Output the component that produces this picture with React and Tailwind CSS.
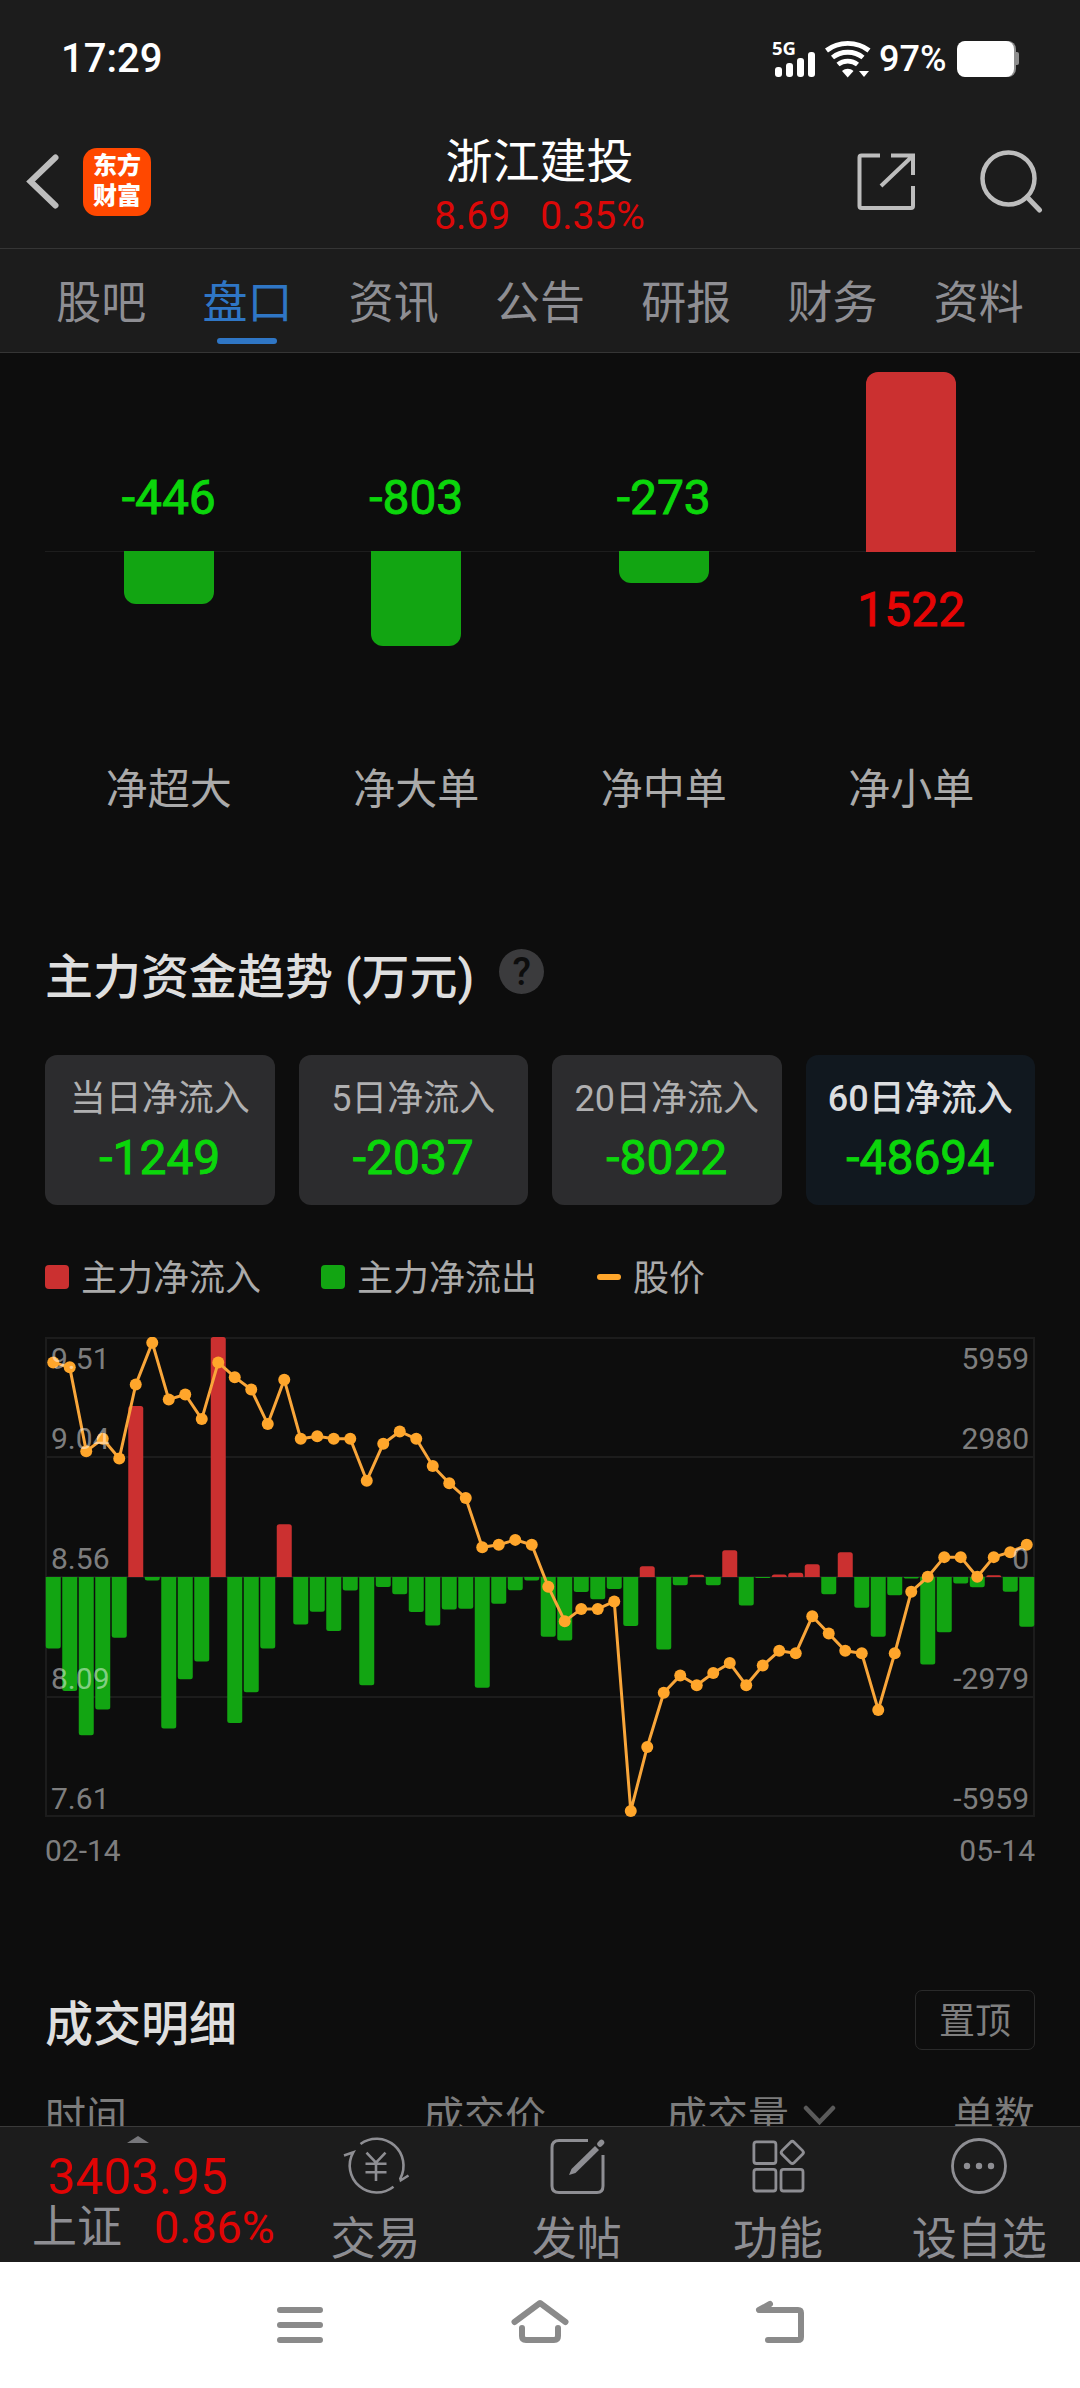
import React from "react";

// font stacks: digits in Roboto, Chinese in Noto
const FONT = "font-['Roboto','Noto_Sans_CJK_SC',sans-serif]";

const tabs = ["股吧", "盘口", "资讯", "公告", "研报", "财务", "资料"];

const orders = [
  { name: "净超大", value: -446, height: 53 },
  { name: "净大单", value: -803, height: 95 },
  { name: "净中单", value: -273, height: 32 },
  { name: "净小单", value: 1522, height: 180 },
];

const periods = [
  { name: "当日净流入", value: "-1249" },
  { name: "5日净流入", value: "-2037" },
  { name: "20日净流入", value: "-8022" },
  { name: "60日净流入", value: "-48694" },
];

const flows = [
  -1773, -2829, -3928, -3290, -1507, 4247, -89, -3760, -2536, -2101, 5959, -3627,
  -2864, -1773, 1312, -1179, -860, -1339, -337, -2687, -248, -426, -869, -1206,
  -807, -789, -2749, -665, -328, -89, -1481, -1578, -372, -550, -301, -1215,
  266, -1800, -204, 53, -204, 665, -709, -27, 62, 106, 319, -426,
  612, -763, -1481, -452, -35, -2172, -1374, -160, -257, 44, -364, -1233,
];

const prices = [
  9.43, 9.41, 9.07, 9.12, 9.04, 9.34, 9.51, 9.28, 9.3, 9.2, 9.43, 9.37,
  9.32, 9.18, 9.36, 9.12, 9.13, 9.12, 9.12, 8.95, 9.1, 9.15, 9.12, 9.01,
  8.94, 8.88, 8.68, 8.69, 8.71, 8.69, 8.52, 8.38, 8.43, 8.43, 8.46, 7.61,
  7.87, 8.09, 8.16, 8.12, 8.17, 8.21, 8.12, 8.2, 8.26, 8.25, 8.4, 8.33,
  8.26, 8.25, 8.02, 8.25, 8.5, 8.56, 8.64, 8.64, 8.56, 8.64, 8.66, 8.69,
];

const axis = [
  { y: 32, left: "9.51", right: "5959" },
  { y: 112, left: "9.04", right: "2980" },
  { y: 232, left: "8.56", right: "0" },
  { y: 352, left: "8.09", right: "-2979" },
  { y: 472, left: "7.61", right: "-5959" },
];

const StatusBar = () => (
  <div className="h-[118px] flex items-start justify-between pl-[61px] pr-[60px] text-white font-medium">
    <div className="text-[40px] leading-[46px] mt-[36px]">17:29</div>
    <div className="flex items-center mt-[36px] h-[46px]">
      <svg width="46" height="46" viewBox="0 0 46 46" fill="#fff">
        <text x="0" y="19" fontSize="18.5" fontWeight="700" fontFamily="Noto Sans">5G</text>
        <rect x="3" y="31" width="7" height="10" rx="3" />
        <rect x="14" y="27" width="7" height="14" rx="3" />
        <rect x="25" y="22" width="7" height="19" rx="3" />
        <rect x="36" y="16" width="7" height="25" rx="3" />
      </svg>
      <svg className="ml-[6px]" width="48" height="46" viewBox="0 0 48 46" fill="none" stroke="#fff" strokeWidth="4.8">
        <path d="M2.5 14.5C14.5 5 33 5 45 14.5" />
        <path d="M8.5 21.5C17 14.5 30.5 14.5 39 21.5" />
        <path d="M14 28.5C19.5 24 28 24 33.5 28.5" />
        <path d="M18 35C21.5 32 26 32 29.5 35L23.7 41.5Z" fill="#fff" stroke="none" />
        <path d="M35 35H45L40 41Z" fill="#fff" stroke="none" />
      </svg>
      <span className="ml-[7px] text-[36px] leading-[46px] w-[73px]">97%</span>
      <svg className="ml-[4px]" width="64" height="46" viewBox="0 0 64 46">
        <rect x="3" y="5" width="57" height="36" rx="8" fill="#8e8e8e" />
        <rect x="58" y="16" width="5" height="13" rx="2" fill="#8e8e8e" />
        <rect x="1" y="5" width="57" height="36" rx="8" fill="#fff" />
      </svg>
    </div>
  </div>
);

const Header = () => (
  <div className="h-[131px] flex items-start justify-between pl-[25px] pr-[37px] border-b border-[#353535]">
    <div className="flex items-center mt-[30px] w-[271px]">
      <svg width="36" height="60" viewBox="0 0 36 60" fill="none" stroke="#bdbdbd" strokeWidth="6" strokeLinecap="round">
        <path d="M30.5 5.5L5.5 29.5L30.5 53.5" />
      </svg>
      <div className="ml-[22px] w-[68px] h-[68px] rounded-[14px] bg-[#ff4800] text-white font-black text-[24px] leading-[30px] text-center pt-[3px]">
        <div>东方</div>
        <div>财富</div>
      </div>
    </div>
    <div className="text-center">
      <div className="text-[47px] leading-[56px] mt-[16px] text-white">浙江建投</div>
      <div className="flex justify-center gap-[30px] text-[39px] leading-[46px] mt-[3px] text-[#dc0808]">
        <span>8.69</span>
        <span>0.35%</span>
      </div>
    </div>
    <div className="flex justify-end w-[260px] pt-[30px]">
      <svg width="64" height="66" viewBox="0 0 64 66" fill="none" stroke="#bdbdbd" strokeWidth="4">
        <path d="M25 7.5H6.5Q4.5 7.5 4.5 9.5V58Q4.5 60 6.5 60H56Q58 60 58 58V38" />
        <path d="M36 7.5H58V27M57 8.5L26 38" />
      </svg>
      <svg className="ml-[58px]" width="66" height="66" viewBox="0 0 66 66" fill="none" stroke="#bdbdbd" strokeWidth="4.5" strokeLinecap="round">
        <circle cx="31.5" cy="30.5" r="26" />
        <path d="M50 49L62.5 62" strokeWidth="5" />
      </svg>
    </div>
  </div>
);

const FlowBars = () => (
  <div className="px-[45px] pt-[18px]">
    <div className="flex">
      {orders.map((o) => {
        const up = o.value > 0;
        return (
          <div key={o.name} className="flex-1 flex flex-col items-center">
            <div className="h-[181px] w-full flex flex-col items-center justify-end border-b border-[#1d1d1d]">
              {up ? (
                <div className="w-[90px] rounded-t-[12px] bg-[#cb3030] -mb-px" style={{ height: o.height }} />
              ) : (
                <div className="text-[48px] leading-[56px] mb-[25px] [-webkit-text-stroke:0.9px] text-[#0bd60b]">{o.value}</div>
              )}
            </div>
            <div className="h-[206px] w-full flex flex-col items-center -mt-px">
              {up ? (
                <div className="text-[48px] leading-[56px] mt-[31px] [-webkit-text-stroke:0.9px] text-[#e60505]">{o.value}</div>
              ) : (
                <div className="w-[90px] rounded-b-[12px] bg-[#12a512]" style={{ height: o.height }} />
              )}
            </div>
            <div className="text-[42px] leading-[60px] mt-[3px] text-[#aaaaaa]">{o.name}</div>
          </div>
        );
      })}
    </div>
  </div>
);

const TrendChart = () => {
  const barX = (i) => 0.75 + i * 16.5;
  const priceY = (p) => 5.7 + ((9.51 - p) / 1.9) * 468.3;
  const points = prices.map((p, i) => [barX(i) + 7.5, priceY(p)]);

  // only the far end of a bar is rounded
  const barPath = (v, i) => {
    const x = barX(i);
    const h = (Math.abs(v) / 5959) * 240;
    const r = Math.min(2.5, h);
    const s = v > 0 ? -1 : 1;
    const end = 240 + s * h;
    return `M${x} 240V${end - s * r}Q${x} ${end} ${x + r} ${end}H${x + 15 - r}Q${x + 15} ${end} ${x + 15} ${end - s * r}V240Z`;
  };

  return (
    <svg width="990" height="536" viewBox="0 0 990 536" className="block mt-[35px]">
      <g fill="none" stroke="#1c1c1c" strokeWidth="2">
        <rect x="1" y="1" width="988" height="478" />
        <path d="M0 120H990M0 240H990M0 360H990" />
      </g>
      {flows.map((v, i) => (
        <path key={i} d={barPath(v, i)} fill={v > 0 ? "#cb3030" : "#12a512"} />
      ))}
      <polyline points={points.map((p) => p.join(",")).join(" ")} fill="none" stroke="#f9a63a" strokeWidth="3" />
      {points.map(([x, y], i) => (
        <circle key={i} cx={x} cy={y} r="6" fill="#ffa62b" />
      ))}
      <g fontSize="30" fill="#fff" fillOpacity="0.48">
        {axis.map((a) => (
          <React.Fragment key={a.y}>
            <text x="6" y={a.y}>{a.left}</text>
            <text x="984" y={a.y} textAnchor="end">{a.right}</text>
          </React.Fragment>
        ))}
        <text x="0" y="524">02-14</text>
        <text x="990" y="524" textAnchor="end">05-14</text>
      </g>
    </svg>
  );
};

const Trend = () => (
  <div className="px-[45px]">
    <div className="flex items-start h-[60px]">
      <h2 className="text-[48px] leading-[60px] font-medium text-[#dedede]">主力资金趋势 (万元)</h2>
      <div className="ml-[25px] mt-px w-[45px] h-[45px] rounded-full bg-[#3b3b3d] text-[#0d0d0d] text-[38px] leading-[46px] font-medium text-center">?</div>
    </div>
    <div className="grid grid-cols-4 gap-[24px] mt-[47px]">
      {periods.map((p, i) => (
        <div
          key={p.name}
          className={`h-[150px] rounded-[12px] text-center pt-[19px] whitespace-nowrap ${i === 3 ? "bg-[#11181f]" : "bg-[#2c2c2e]"}`}
        >
          <div className={`text-[36px] leading-[50px] ${i === 3 ? "font-medium text-[#dcdee0]" : "text-[#b0b0b1]"}`}>{p.name}</div>
          <div className="text-[48px] leading-[56px] mt-[6px] [-webkit-text-stroke:0.9px] text-[#0bd60b]">{p.value}</div>
        </div>
      ))}
    </div>
    <div className="flex items-center h-[50px] gap-[60px] mt-[47px] text-[36px] leading-[50px] text-[#aaaaaa]">
      <div className="flex items-center gap-3">
        <span className="w-6 h-6 rounded-[4px] bg-[#cb3030]" />
        <span className="pt-[4px]">主力净流入</span>
      </div>
      <div className="flex items-center gap-3">
        <span className="w-6 h-6 rounded-[4px] bg-[#12a512]" />
        <span className="pt-[4px]">主力净流出</span>
      </div>
      <div className="flex items-center gap-3">
        <span className="w-6 h-[6px] rounded-[3px] bg-[#ffa62b]" />
        <span className="pt-[4px]">股价</span>
      </div>
    </div>
    <TrendChart />
  </div>
);

const Deals = () => (
  <div className="px-[45px] mt-[117px]">
    <div className="flex items-start justify-between h-[60px]">
      <h2 className="text-[48px] leading-[60px] font-medium text-[#dedede] mt-[5px]">成交明细</h2>
      <div className="w-[120px] h-[60px] rounded-[7px] border border-[#2a2a2a] text-[36px] leading-[62px] text-center text-[#7f7f7f]">置顶</div>
    </div>
    <div className="flex text-[41px] leading-[60px] mt-[37px] text-[#7c7c7c]">
      <span className="w-[378px]">时间</span>
      <span className="w-[243px]">成交价</span>
      <span className="flex-1 flex">
        成交量
        <svg className="ml-[13px] mt-[16px]" width="34" height="24" viewBox="0 0 34 24" fill="none" stroke="#5a5a5a" strokeWidth="4.5" strokeLinecap="round">
          <path d="M4 5L17.5 19L31 5" />
        </svg>
      </span>
      <span>单数</span>
    </div>
  </div>
);

const TradeIcon = () => (
  <svg className="shrink-0" width="68" height="60" viewBox="0 0 68 60" fill="none" stroke="#8e8e93" strokeWidth="2.6">
    <path d="M18.5 8A27 27 0 0 1 58.3 42.5L58.8 44.3L66.5 39.5" />
    <path d="M51.5 50.7A27 27 0 0 1 11.2 16.3L2 19.5" />
    <path d="M24.5 16.7L34 26.7L43.5 16.7M34 26.7V45M23.5 27.7H44.5M23.5 36.3H44.5" />
  </svg>
);

const PostIcon = () => (
  <svg className="shrink-0" width="60" height="60" viewBox="0 0 60 60" fill="none" stroke="#8e8e93" strokeWidth="3">
    <path d="M41 4.5H12Q5 4.5 5 11.5V50Q5 56.5 12 56.5H50Q56 56.5 56 50V19" />
    <path d="M22 39L24.5 33L48 10L52 14L28.5 37Z" fill="#8e8e93" stroke="none" />
    <path d="M53 8L54.5 6.5" strokeWidth="5.5" strokeLinecap="round" />
  </svg>
);

const GridIcon = () => (
  <svg className="shrink-0" width="60" height="60" viewBox="0 0 60 60" fill="none" stroke="#8e8e93" strokeWidth="2.8">
    <rect x="5.9" y="5.9" width="22" height="21.6" rx="2.5" />
    <rect x="5.9" y="33.4" width="22" height="21.6" rx="2.5" />
    <rect x="33" y="33.4" width="22" height="21.6" rx="2.5" />
    <rect x="35.8" y="7.9" width="17" height="17" rx="2.5" transform="rotate(45 44.3 16.4)" />
  </svg>
);

const MoreIcon = () => (
  <svg className="shrink-0" width="60" height="60" viewBox="0 0 60 60" fill="none" stroke="#8e8e93" strokeWidth="2.8">
    <circle cx="30" cy="30" r="26.5" />
    <g fill="#8e8e93" stroke="none">
      <circle cx="18" cy="30" r="3.2" />
      <circle cx="30" cy="30" r="3.2" />
      <circle cx="42" cy="30" r="3.2" />
    </g>
  </svg>
);

const actions = [
  { name: "交易", icon: <TradeIcon /> },
  { name: "发帖", icon: <PostIcon /> },
  { name: "功能", icon: <GridIcon /> },
  { name: "设自选", icon: <MoreIcon /> },
];

const BottomBar = () => (
  <div className="h-[136px] shrink-0 flex bg-[#1c1c1c] border-t border-[#3a3a3a] text-[#8e8e93]">
    <div className="w-[275px] pt-[9px]">
      <svg className="ml-[127px] block" width="22" height="7" viewBox="0 0 22 7">
        <path d="M0 7L11 0L22 7Z" fill="#77777b" />
      </svg>
      <div className="ml-[48px] mt-[4px] text-[49.5px] leading-[60px] text-[#e00505]">3403.95</div>
      <div className="ml-[32px] -mt-[4px] flex gap-[32px] text-[45px] leading-[50px]">
        <span>上证</span>
        <span className="text-[#e00505]">0.86%</span>
      </div>
    </div>
    {actions.map((a) => (
      <div key={a.name} className="flex-1 flex flex-col items-center pt-[9px]">
        {a.icon}
        <div className="text-[45px] leading-[46px] mt-[21px] whitespace-nowrap">{a.name}</div>
      </div>
    ))}
  </div>
);

const SystemNav = () => (
  <div className="h-[126px] shrink-0 bg-white flex items-center justify-center gap-[180px]">
    <svg width="60" height="60" viewBox="0 0 60 60" stroke="#8a8a8a" strokeWidth="6" strokeLinecap="round">
      <path d="M10 15H50M10 30H50M10 45H50" />
    </svg>
    <svg width="60" height="60" viewBox="0 0 60 60" fill="none" stroke="#8a8a8a" strokeWidth="6" strokeLinecap="round" strokeLinejoin="round">
      <path d="M4.5 27L30 8L55.5 27" />
      <path d="M12 33V41Q12 45 16 45H44Q48 45 48 41V33" />
    </svg>
    <svg width="60" height="60" viewBox="0 0 60 60" fill="none" stroke="#8a8a8a" strokeWidth="6" strokeLinecap="round" strokeLinejoin="round">
      <path d="M20 9L9 15H48Q51 15 51 18V42Q51 45 48 45H18" />
    </svg>
  </div>
);

const App = () => {
  return (
    <div className={`${FONT} w-[1080px] h-[2388px] overflow-hidden flex flex-col bg-[#0d0d0d]`}>
      <div className="bg-[#1c1c1c] shrink-0">
        <StatusBar />
        <Header />
        <div className="h-[104px] flex px-[28px] border-b border-[#353535]">
          {tabs.map((t, i) => (
            <div key={t} className={`flex-1 flex flex-col items-center ${i === 1 ? "text-[#2f76c5]" : "text-[#8e8e93]"}`}>
              <div className="text-[45px] leading-[60px] mt-[25px]">{t}</div>
              {i === 1 && <div className="w-[60px] h-[6px] mt-[4px] rounded-full bg-[#2f76c5]" />}
            </div>
          ))}
        </div>
      </div>
      <div className="flex-1 min-h-0 overflow-hidden">
        <FlowBars />
        <div className="h-[128px]" />
        <Trend />
        <Deals />
      </div>
      <BottomBar />
      <SystemNav />
    </div>
  );
};

export default App;
